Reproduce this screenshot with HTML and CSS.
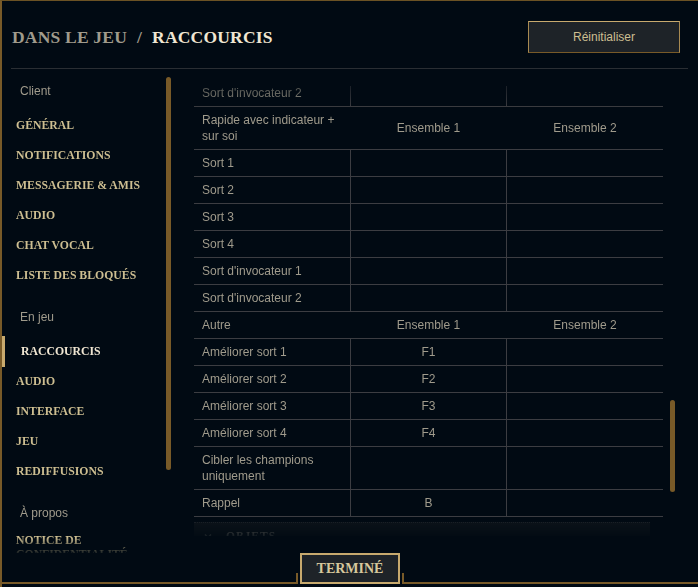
FILE: index.html
```html
<!DOCTYPE html>
<html>
<head>
  <meta http-equiv="content-type" content="text/html; charset=utf-8" />
  <title>Raccourcis</title>
  <link rel="stylesheet" href="styles.css">
</head>

<body>
  <div class="window">
    <div class="header">
      <h1 class="title">
        <span class="crumb">DANS LE JEU</span><span class="crumb sep">/</span><span class="current">RACCOURCIS</span>
      </h1>
      <button class="btn-reset">Réinitialiser</button>
    </div>

    <div class="main">
      <div class="sidebar">
        <div class="side-scroll">
          <div class="section">Client</div>
          <div class="nav-item">GÉNÉRAL</div>
          <div class="nav-item">NOTIFICATIONS</div>
          <div class="nav-item">MESSAGERIE &amp; AMIS</div>
          <div class="nav-item">AUDIO</div>
          <div class="nav-item">CHAT VOCAL</div>
          <div class="nav-item">LISTE DES BLOQUÉS</div>

          <div class="section">En jeu</div>
          <div class="nav-item active">RACCOURCIS</div>
          <div class="nav-item">AUDIO</div>
          <div class="nav-item">INTERFACE</div>
          <div class="nav-item">JEU</div>
          <div class="nav-item">REDIFFUSIONS</div>

          <div class="section">À propos</div>
          <div class="nav-item">NOTICE DE<br>CONFIDENTIALITÉ</div>
        </div>
        <div class="thumb side-thumb"></div>
      </div>

      <div class="content">
        <div class="viewport">
          <div class="table">
            <div class="row"><div class="cell">Sort d'invocateur 2</div><div class="cell"></div><div class="cell"></div></div>
            <div class="row head"><div class="cell">Rapide avec indicateur + sur soi</div><div class="cell">Ensemble 1</div><div class="cell">Ensemble 2</div></div>
            <div class="row"><div class="cell">Sort 1</div><div class="cell"></div><div class="cell"></div></div>
            <div class="row"><div class="cell">Sort 2</div><div class="cell"></div><div class="cell"></div></div>
            <div class="row"><div class="cell">Sort 3</div><div class="cell"></div><div class="cell"></div></div>
            <div class="row"><div class="cell">Sort 4</div><div class="cell"></div><div class="cell"></div></div>
            <div class="row"><div class="cell">Sort d'invocateur 1</div><div class="cell"></div><div class="cell"></div></div>
            <div class="row"><div class="cell">Sort d'invocateur 2</div><div class="cell"></div><div class="cell"></div></div>
            <div class="row head"><div class="cell">Autre</div><div class="cell">Ensemble 1</div><div class="cell">Ensemble 2</div></div>
            <div class="row"><div class="cell">Améliorer sort 1</div><div class="cell">F1</div><div class="cell"></div></div>
            <div class="row"><div class="cell">Améliorer sort 2</div><div class="cell">F2</div><div class="cell"></div></div>
            <div class="row"><div class="cell">Améliorer sort 3</div><div class="cell">F3</div><div class="cell"></div></div>
            <div class="row"><div class="cell">Améliorer sort 4</div><div class="cell">F4</div><div class="cell"></div></div>
            <div class="row"><div class="cell">Cibler les champions uniquement</div><div class="cell"></div><div class="cell"></div></div>
            <div class="row"><div class="cell">Rappel</div><div class="cell">B</div><div class="cell"></div></div>
          </div>
          <div class="group">
            <svg class="chevron" width="8" height="8" viewBox="0 0 8 8"><path d="M1 2.5 L4 5.5 L7 2.5" fill="none" stroke="#5b5a56" stroke-width="1.4"/></svg>
            <span>OBJETS</span>
          </div>
        </div>
        <div class="thumb content-thumb"></div>
      </div>
    </div>

    <div class="footer">
      <div class="rail left"></div>
      <button class="btn-done">TERMINÉ</button>
      <div class="rail right"></div>
    </div>
  </div>
</body>

</html>
```

FILE: styles.css
```css
html, body {
  margin: 0;
  padding: 0;
  background: #010a13;
}
.window {
  height: 587px;
  box-sizing: border-box;
  border-top: 1px solid #6b5224;
  border-left: 2px solid #785a28;
  display: flex;
  flex-direction: column;
  font-family: "Liberation Sans", Arial, sans-serif;
  font-size: 12px;
  color: #a09b8c;
  overflow: hidden;
}

/* header */
.header {
  height: 68px;
  box-sizing: border-box;
  margin: 0 10px 0 9px;
  padding: 4px 8px 0 1px;
  border-bottom: 1px solid #2a2e33;
  display: flex;
  align-items: center;
  justify-content: space-between;
  flex: none;
}
.title {
  margin: 0;
  font-family: "Liberation Serif", serif;
  font-weight: bold;
  font-size: 17.5px;
  letter-spacing: 0.2px;
  line-height: 20px;
  color: #a09b8c;
}
.title .sep {
  margin: 0 10px;
}
.title .current {
  color: #f0e6d2;
}
.btn-reset {
  width: 152px;
  height: 32px;
  background: #1e2328;
  border: 1px solid #a88a52;
  border-top-color: #c8aa6e;
  border-bottom-color: #785a28;
  color: #cdbe91;
  font-family: "Liberation Sans", Arial, sans-serif;
  font-size: 12px;
  padding: 0;
}

/* body */
.main {
  height: 484px;
  display: flex;
  flex: none;
}
.sidebar {
  position: relative;
  width: 172px;
  flex: none;
}
.side-scroll {
  height: 100%;
  box-sizing: border-box;
  padding-top: 11px;
  overflow: hidden;
  -webkit-mask-image: linear-gradient(to bottom, #000 calc(100% - 16px), rgba(0,0,0,0.15) 100%);
  mask-image: linear-gradient(to bottom, #000 calc(100% - 16px), rgba(0,0,0,0.15) 100%);
}
.section {
  height: 22px;
  line-height: 22px;
  padding-left: 18px;
  margin-bottom: 8px;
  color: #a09b8c;
}
.nav-item + .section {
  margin-top: 16px;
}
.nav-item {
  height: 30px;
  box-sizing: border-box;
  padding-top: 1px;
  display: flex;
  align-items: center;
  padding-left: 14px;
  font-family: "Liberation Serif", serif;
  font-weight: bold;
  font-size: 11.75px;
  line-height: 14px;
  color: #cdbe91;
  position: relative;
}
.nav-item.active {
  padding-left: 19px;
  color: #f0e6d2;
}
.nav-item.active::before {
  content: "";
  position: absolute;
  left: 0;
  top: 0;
  width: 3px;
  height: 31px;
  background: #c8aa6e;
}
.thumb {
  position: absolute;
  width: 5px;
  border-radius: 3px;
  background: #785a28;
}
.side-thumb {
  left: 164px;
  top: 8px;
  height: 393px;
}

/* table */
.content {
  position: relative;
  flex: 1;
  padding: 17px 0 0 20px;
}
.viewport {
  width: 469px;
  height: 450px;
  overflow: hidden;
  -webkit-mask-image: linear-gradient(to bottom, rgba(0,0,0,0.45) 0, #000 22px, #000 calc(100% - 14px), rgba(0,0,0,0.25) 100%);
  mask-image: linear-gradient(to bottom, rgba(0,0,0,0.45) 0, #000 22px, #000 calc(100% - 14px), rgba(0,0,0,0.25) 100%);
}
.table {
  margin-top: -6px;
}
.row {
  display: grid;
  grid-template-columns: 156px 156px 157px;
  border-bottom: 1px solid #3c3d42;
}
.cell {
  padding: 5px 8px;
  line-height: 16px;
  min-height: 16px;
}
.cell + .cell {
  border-left: 1px solid #3c3d42;
  display: flex;
  align-items: center;
  justify-content: center;
  padding: 5px 0;
}
.row.head .cell + .cell {
  border-left-color: transparent;
}
.group {
  margin-top: 5px;
  width: 456px;
  height: 26px;
  background: #0b1219;
  border-top: 1px dotted #1a2027;
  display: flex;
  align-items: center;
  gap: 14px;
  padding-left: 10px;
  box-sizing: border-box;
  font-family: "Liberation Serif", serif;
  font-weight: bold;
  font-size: 11.5px;
  letter-spacing: 1px;
  color: #5b5a56;
}
.content-thumb {
  left: 496px;
  top: 331px;
  height: 92px;
}

/* footer */
.footer {
  height: 31px;
  margin-bottom: 3px;
  display: flex;
  align-items: flex-end;
  flex: none;
}
.rail {
  height: 11px;
  box-sizing: border-box;
  border-bottom: 2px solid #785a28;
}
.rail.left {
  width: 296px;
  border-right: 2px solid #785a28;
  margin-right: 2px;
}
.rail.right {
  flex: 1;
  border-left: 2px solid #785a28;
  margin-left: 2px;
}
.btn-done {
  width: 100px;
  height: 31px;
  box-sizing: border-box;
  background: #1e2328;
  border: 2px solid #c8aa6e;
  color: #d6c89c;
  font-family: "Liberation Serif", serif;
  font-weight: bold;
  font-size: 14px;
  padding: 0;
}
```
